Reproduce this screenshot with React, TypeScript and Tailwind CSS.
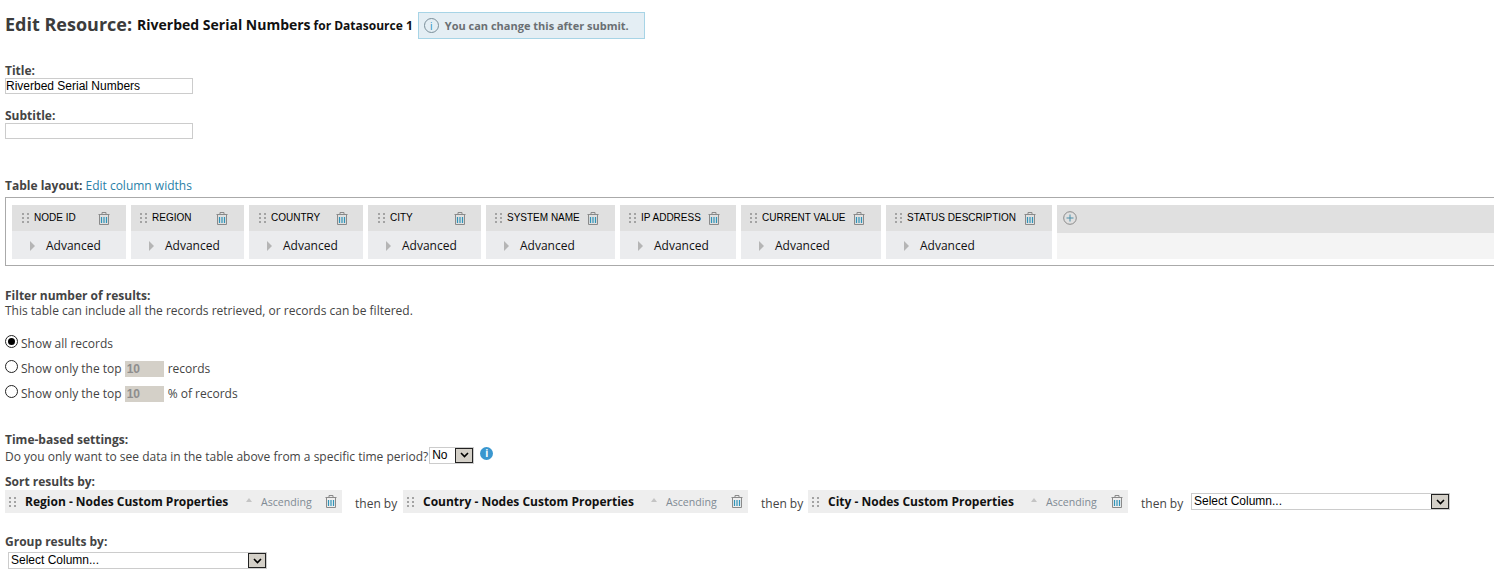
const columns = [
  { name: "NODE ID", width: "w-[114px]", pad: "pl-[10px]", trashGap: "ml-[22px]" },
  { name: "REGION", width: "w-[113px]", pad: "pl-[9px]", trashGap: "ml-[25px]" },
  { name: "COUNTRY", width: "w-[114px]", pad: "pl-[10px]", trashGap: "ml-[16px]" },
  { name: "CITY", width: "w-[113px]", pad: "pl-[10px]", trashGap: "ml-[41px]" },
  { name: "SYSTEM NAME", width: "w-[129px]", pad: "pl-[9px]", trashGap: "ml-[7px]" },
  { name: "IP ADDRESS", width: "w-[116px]", pad: "pl-[9px]", trashGap: "ml-[7px]" },
  { name: "CURRENT VALUE", width: "w-[140px]", pad: "pl-[9px]", trashGap: "ml-[7px]" },
  { name: "STATUS DESCRIPTION", width: "w-[166px]", pad: "pl-[9px]", trashGap: "ml-[8px]" },
];

const sorts = [
  { name: "Region - Nodes Custom Properties", width: "w-[337px]", gap: "w-[221px]", trashGap: "ml-[9px]", thenWidth: "w-[61px]" },
  { name: "Country - Nodes Custom Properties", width: "w-[345px]", gap: "w-[228px]", trashGap: "ml-[10px]", thenWidth: "w-[60px]" },
  { name: "City - Nodes Custom Properties", width: "w-[320px]", gap: "w-[203px]", trashGap: "ml-[10px]", thenWidth: "w-[61px]" },
];

function Grip() {
  return (
    <svg width="7" height="10" viewBox="0 0 7 10" className="shrink-0 fill-[#a3a3a3]">
      <rect x="0" y="0" width="2" height="2" />
      <rect x="5" y="0" width="2" height="2" />
      <rect x="0" y="4" width="2" height="2" />
      <rect x="5" y="4" width="2" height="2" />
      <rect x="0" y="8" width="2" height="2" />
      <rect x="5" y="8" width="2" height="2" />
    </svg>
  );
}

function Trash() {
  return (
    <svg width="12" height="13" viewBox="0 0 12 13" fill="none" className="shrink-0">
      <path d="M0.5 2.5H11.5M4 2.5V0.5H8V2.5" stroke="#8a8a8a" />
      <path d="M1.5 2.5V12.5H10.5V2.5" stroke="#8a8a8a" />
      <path d="M3.5 5V11M6 5V11M8.5 5V11" stroke="#2f93b8" strokeWidth="1.2" />
    </svg>
  );
}

function Radio({ checked }: { checked?: boolean }) {
  return (
    <span className="mb-[4px] flex size-[13px] shrink-0 items-center justify-center rounded-full border-[1.5px] border-[#222] bg-white">
      {checked && <span className="size-[7px] rounded-full bg-black" />}
    </span>
  );
}

function FakeSelect({ value, className }: { value: string; className: string }) {
  return (
    <span className={`relative block h-[17px] ${className}`}>
      <select className="block size-full appearance-none border border-[#ccc] bg-white pl-[2px] font-['Liberation_Sans',sans-serif] text-[12px] leading-[13px] text-black outline-none">
        <option>{value}</option>
      </select>
      <span className="pointer-events-none absolute top-px right-px flex h-[15px] w-[18px] items-center justify-center border border-[#222] bg-[#d4d0c8]">
        <svg width="9" height="6" viewBox="0 0 9 6" fill="none">
          <path d="M1 1L4.5 4.5L8 1" stroke="#000" strokeWidth="1.6" />
        </svg>
      </span>
    </span>
  );
}

function TopInput() {
  return (
    <input
      readOnly
      value="10"
      className="h-[16px] w-[39px] bg-[#d4d0c8] pl-[2px] font-['Liberation_Sans',sans-serif] text-[12px] font-bold text-[#8e8e8e] outline-none"
    />
  );
}

export default function App() {
  return (
    <div className="h-[582px] w-[1494px] overflow-hidden bg-white pl-[5px] font-['Open_Sans',sans-serif] text-[12px] leading-[16px] text-[#444]">
      {/* heading */}
      <div className="flex h-[39px] items-center pt-[12px] font-bold">
        <span className="mb-[4px] text-[18px] text-[#3c3c3c]">Edit Resource:</span>
        <span className="mb-[2px] ml-[5px] text-[14px] text-[#111]">Riverbed Serial Numbers</span>
        <span className="ml-[3px] text-[12px] text-[#111]">for Datasource 1</span>
        <span className="ml-[5px] flex h-[27px] w-[227px] items-center border border-[#a7d4e6] bg-[#e4eef4] pl-[5px] text-[11px] text-[#6a6f73]">
          <span className="mr-[6px] flex size-[15px] items-center justify-center rounded-full border border-[#7a8e99] text-[10px] font-normal text-[#1f8fc0]">
            i
          </span>
          You can change this after submit.
        </span>
      </div>

      {/* title fields */}
      <div className="mt-[24px] font-bold leading-[15px]">Title:</div>
      <input
        readOnly
        value="Riverbed Serial Numbers"
        className="block h-[16px] w-[188px] border border-[#ccc] pl-0 font-['Liberation_Sans',sans-serif] text-[12px] text-black outline-none"
      />
      <div className="mt-[14px] font-bold leading-[15px]">Subtitle:</div>
      <input readOnly className="block h-[16px] w-[188px] border border-[#ccc] outline-none" />

      {/* table layout */}
      <div className="mt-[39px] h-[16px]">
        <span className="font-bold">Table layout: </span>
        <span className="text-[#2a7fa8]">Edit column widths</span>
      </div>
      <div className="mt-[3px] flex h-[69px] gap-[5px] border-y border-l border-[#aaa] pt-[7px] pb-[6px] pl-[6px]">
        {columns.map((col) => (
          <div key={col.name} className={`${col.width} shrink-0 bg-[#ebecee]`}>
            <div className={`flex h-[26px] items-center bg-[#e0e0e0] ${col.pad}`}>
              <Grip />
              <span className="ml-[5px] font-['Liberation_Sans',sans-serif] text-[10px] whitespace-nowrap text-black">
                {col.name}
              </span>
              <span className={col.trashGap}>
                <Trash />
              </span>
            </div>
            <div className="flex h-[28px] items-center pt-[1px] pl-[18px] text-[12px] text-[#111]">
              <span className="h-0 w-0 border-y-[5px] border-l-[5px] border-y-transparent border-l-[#b5b5b5]" />
              <span className="ml-[11px]">Advanced</span>
            </div>
          </div>
        ))}
        <div className="flex-1 bg-[#f4f4f4]">
          <div className="flex h-[28px] items-center bg-[#e0e0e0] pb-[2px] pl-[6px]">
            <svg width="14" height="14" viewBox="0 0 14 14" fill="none">
              <circle cx="7" cy="7" r="6.3" stroke="#8a8a8a" />
              <path d="M7 3.5V10.5M3.5 7H10.5" stroke="#4b8ea8" />
            </svg>
          </div>
        </div>
      </div>

      {/* filter */}
      <div className="mt-[22px] font-bold">Filter number of results:</div>
      <div className="mt-[-1px]">This table can include all the records retrieved, or records can be filtered.</div>
      <div className="mt-[13px] flex h-[24px] items-center gap-[3px] pb-[1px]">
        <Radio checked />
        Show all records
      </div>
      <div className="flex h-[25px] items-center gap-[3px]">
        <Radio />
        Show only the top
        <TopInput />
        <span className="ml-[1px]">records</span>
      </div>
      <div className="flex h-[25px] items-center gap-[3px]">
        <Radio />
        Show only the top
        <TopInput />
        <span className="ml-[1px]">% of records</span>
      </div>

      {/* time based */}
      <div className="mt-[26px] font-bold">Time-based settings:</div>
      <div className="flex h-[17px] items-center">
        Do you only want to see data in the table above from a specific time period?
        <span className="mb-[3px] ml-px">
          <FakeSelect value="No" className="w-[45px]" />
        </span>
        <span className="mb-[7px] ml-[6px] flex size-[13px] items-center justify-center rounded-full bg-[#3a97cf] text-[10px] font-bold text-white">
          i
        </span>
      </div>

      {/* sort */}
      <div className="mt-[9px] font-bold">Sort results by:</div>
      <div className="flex h-[26px] items-start">
        {sorts.map((sort) => (
          <div key={sort.name} className="flex items-start">
            <div className={`${sort.width} flex h-[23px] items-center bg-[#eeeeee] pl-[4px]`}>
              <Grip />
              <span className={`${sort.gap} ml-[9px] shrink-0 text-[12px] font-bold whitespace-nowrap text-[#111]`}>
                {sort.name}
              </span>
              <span className="mt-[-3px] h-0 w-0 border-x-[3px] border-b-[4px] border-x-transparent border-b-[#c4c4c4]" />
              <span className="ml-[9px] w-[55px] text-[10.6px] text-[#7f8a94]">Ascending</span>
              <span className={sort.trashGap}>
                <Trash />
              </span>
            </div>
            <span className={`${sort.thenWidth} mt-[6px] pl-[13px] text-[12px] whitespace-nowrap`}>then by</span>
          </div>
        ))}
        <FakeSelect value="Select Column..." className="mt-[3px] ml-[2px] w-[259px]" />
      </div>

      {/* group */}
      <div className="mt-[18px] font-bold">Group results by:</div>
      <FakeSelect value="Select Column..." className="mt-[2px] ml-[3px] w-[259px]" />
    </div>
  );
}
